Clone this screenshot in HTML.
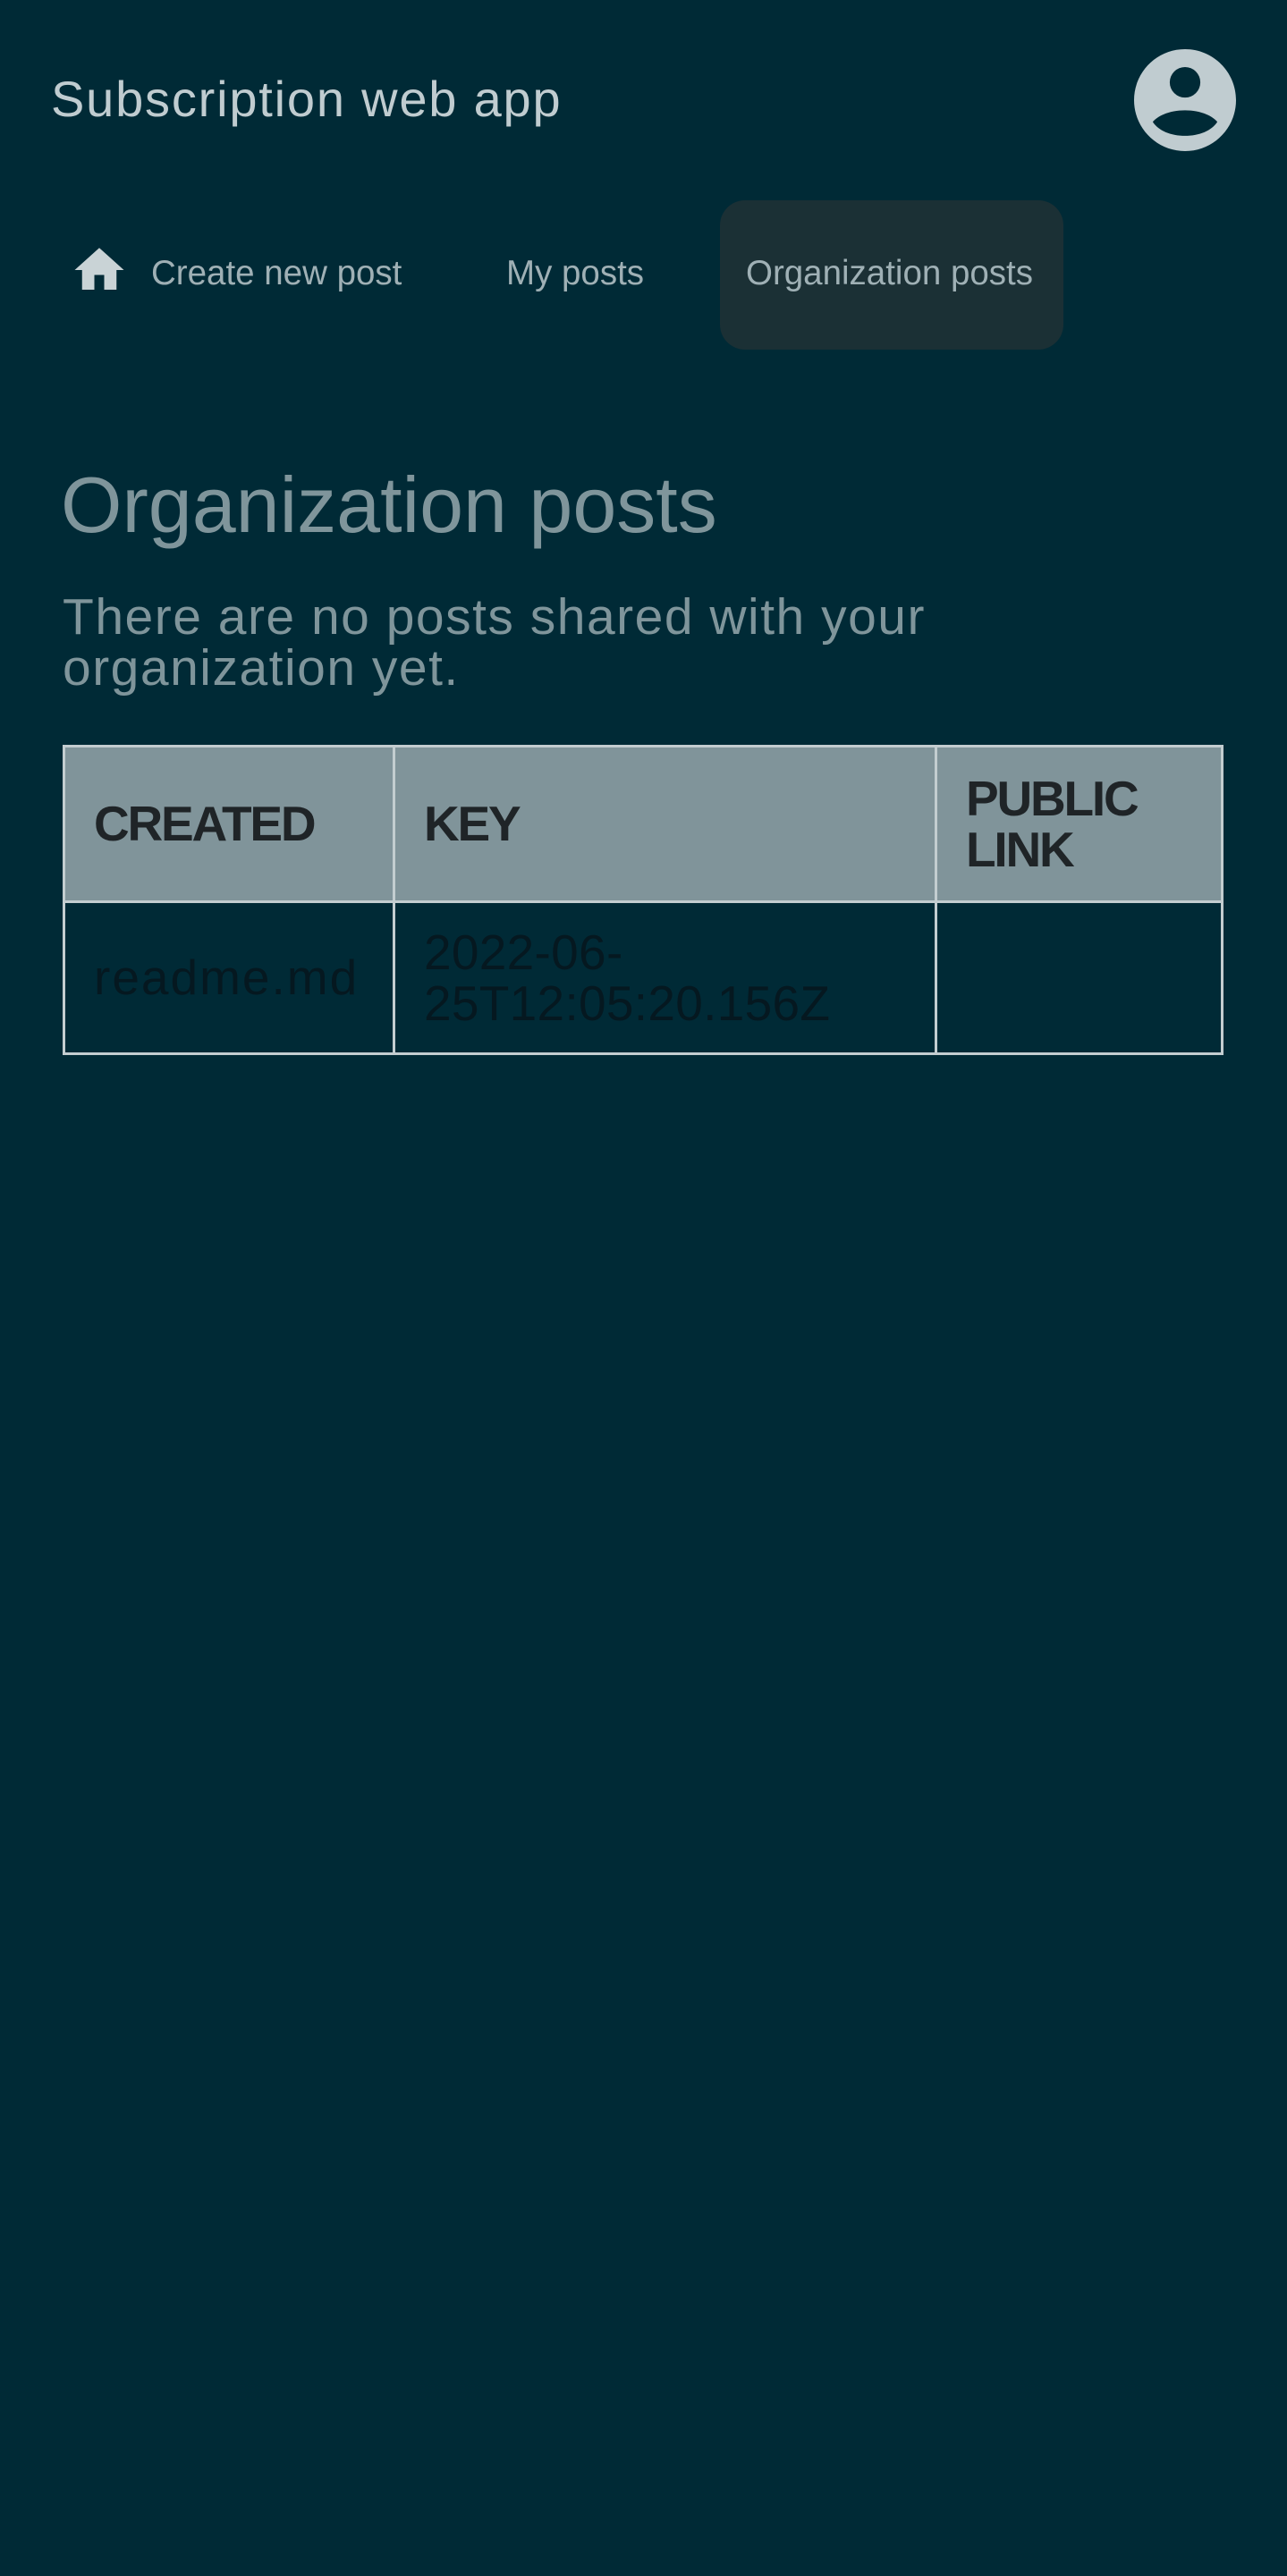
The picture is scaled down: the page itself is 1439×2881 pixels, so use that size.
<!DOCTYPE html>
<html><head><meta charset="utf-8"><style>
*{margin:0;padding:0;box-sizing:border-box}
html,body{width:1439px;height:2881px;background:#002a36;overflow:hidden}
body{position:relative;font-family:"Liberation Sans",sans-serif}
.a{position:absolute;white-space:nowrap}
.title{left:57px;top:78px;font-size:56px;color:#c0ccd0;line-height:66px;letter-spacing:1.8px}
.nav{font-size:38.5px;color:#9fb0b5;line-height:44px;top:284px}
.pill{position:absolute;left:805px;top:224px;width:384px;height:167px;border-radius:28px;background:#1b3035}
h1{position:absolute;left:68px;top:515px;font-size:88px;font-weight:normal;color:#7f959b;line-height:100px;white-space:nowrap;letter-spacing:0px}
p{position:absolute;left:70px;top:662px;font-size:57px;color:#7f959b;line-height:57px;width:1100px;letter-spacing:1.5px}
table{position:absolute;left:70px;top:833px;width:1298px;border-collapse:collapse;border:3px solid #c3cdd0}
td,th{border:3px solid #c3cdd0;vertical-align:middle;padding:0 0 0 32px;text-align:left;font-size:55px;line-height:57px}
th{background:#80949a;color:#1f2427;height:174px;font-weight:bold;letter-spacing:-2.2px}
td{color:#051820;height:170px;letter-spacing:2px}
td.k{letter-spacing:0.3px}
</style></head><body>
<div class="a title">Subscription web app</div>
<svg class="a" style="left:1268px;top:55px" width="114" height="114" viewBox="0 0 24 24"><path fill="#c0ccd0" d="M12 0C5.37 0 0 5.37 0 12s5.37 12 12 12 12-5.37 12-12S18.63 0 12 0zm0 4.2a3.6 3.6 0 110 7.2 3.6 3.6 0 010-7.2zM12 20.4c-3.3 0-6.3-1.2-7.6-3.3C6 15.3 9 14.4 12 14.4s6 .9 7.6 2.7c-1.3 2.1-4.3 3.3-7.6 3.3z"/></svg>
<div class="pill"></div>
<svg class="a" style="left:78px;top:269px" width="66" height="66" viewBox="0 0 24 24"><path fill="#c9d3d6" d="M10 20v-6h4v6h5v-8h3L12 3 2 12h3v8z"/></svg>
<div class="a nav" style="left:169px">Create new post</div>
<div class="a nav" style="left:566px">My posts</div>
<div class="a nav" style="left:834px">Organization posts</div>
<h1>Organization posts</h1>
<p>There are no posts shared with your organization yet.</p>
<table>
<tr><th style="width:369px">CREATED</th><th style="width:606px">KEY</th><th>PUBLIC<br>LINK</th></tr>
<tr><td>readme.md</td><td class="k">2022-06-<br>25T12:05:20.156Z</td><td></td></tr>
</table>
</body></html>
